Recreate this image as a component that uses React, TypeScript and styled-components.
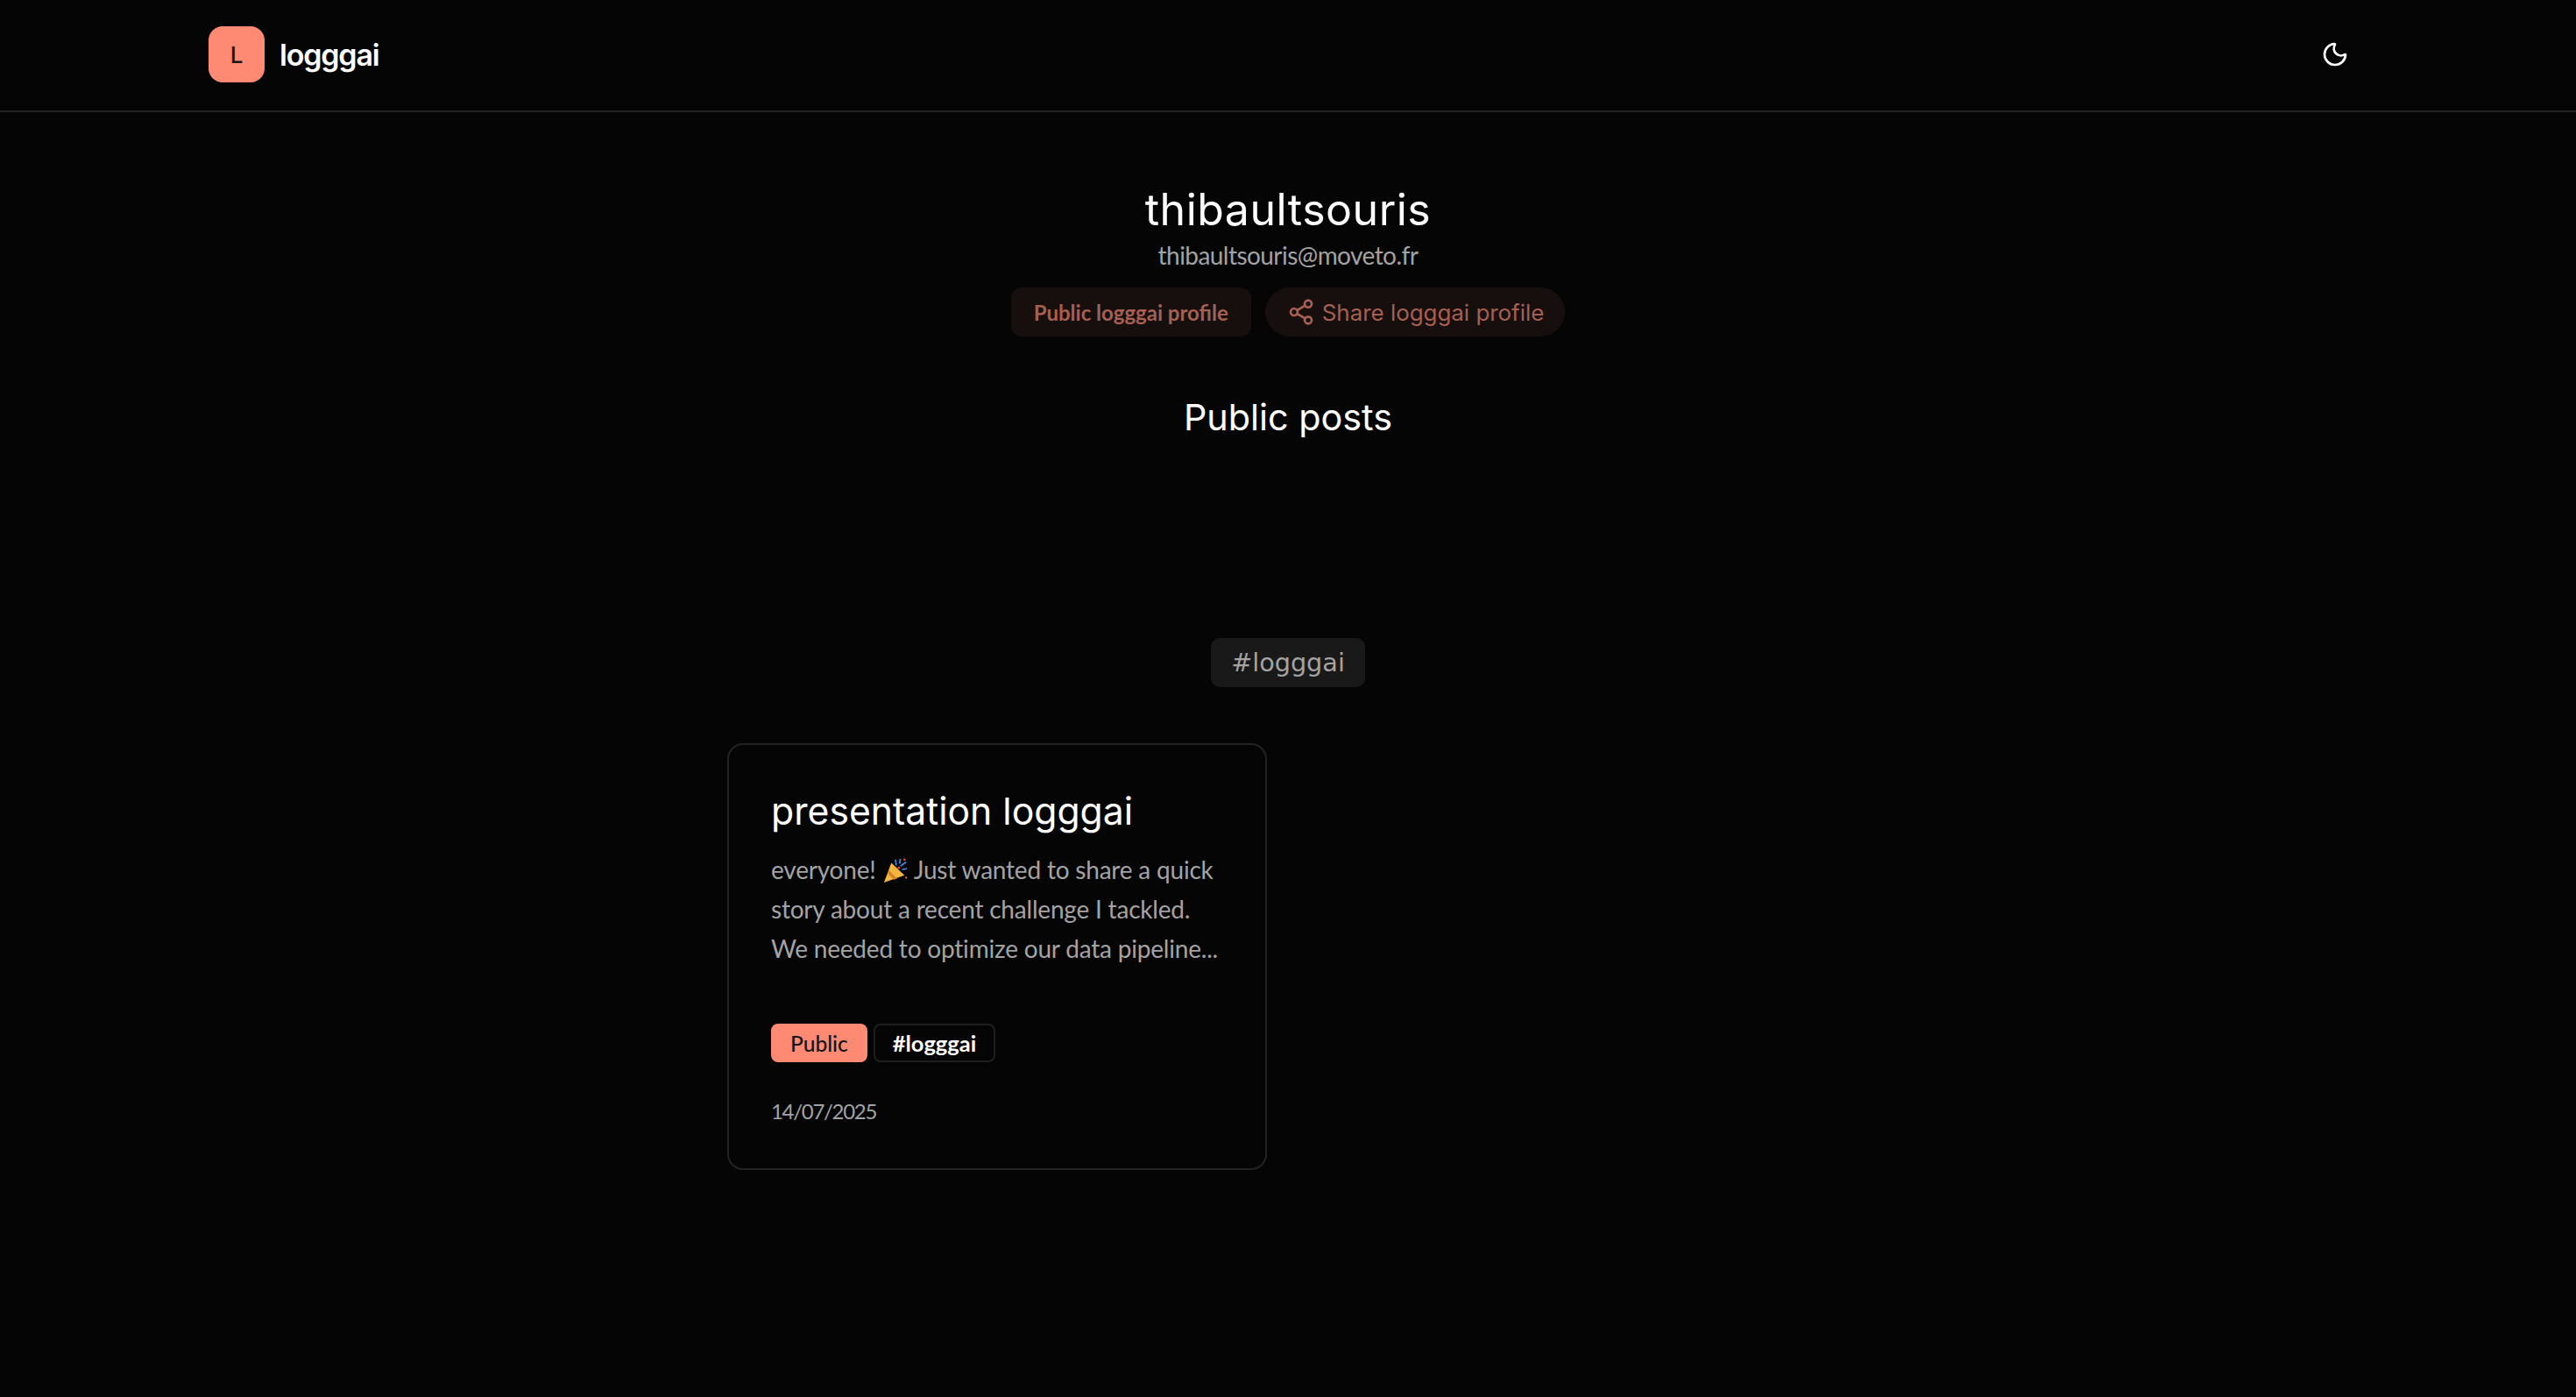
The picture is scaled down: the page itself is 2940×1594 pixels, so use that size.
import { createGlobalStyle, styled } from 'styled-components';
import { Moon, Share2 } from 'lucide-react';

const GlobalStyle = createGlobalStyle`
    html, body {
        margin: 0;
        padding: 0;
        background: #050505;
        color: #fff;
        font-family: 'Lato', 'Inter', sans-serif;
    }
    * {
        box-sizing: border-box;
    }
`;

const Page = styled.div`
    min-height: 1594px;
    background: #050505;
`;

const Navbar = styled.header`
    height: 128px;
    border-bottom: 2px solid #232323;
    padding: 0 238px;
    display: flex;
    align-items: center;
    justify-content: space-between;
`;

const Brand = styled.div`
    display: flex;
    align-items: center;
    gap: 17px;
    margin-top: -2px;
`;

const LogoMark = styled.div`
    width: 64px;
    height: 64px;
    border-radius: 16px;
    background: #ff8a73;
    color: #141414;
    display: flex;
    align-items: center;
    justify-content: center;
    font-family: 'Inter', sans-serif;
    font-size: 26px;
    font-weight: 500;
`;

const BrandName = styled.span`
    font-family: 'Inter', sans-serif;
    font-size: 34px;
    font-weight: 600;
    letter-spacing: -1.2px;
`;

const ThemeButton = styled.button`
    width: 74px;
    height: 60px;
    padding: 0;
    border: 0;
    background: transparent;
    color: #fff;
    display: flex;
    align-items: center;
    justify-content: center;
    margin-top: -2px;
`;

const Profile = styled.section`
    display: flex;
    flex-direction: column;
    align-items: center;
    padding-top: 83px;
`;

const Username = styled.h1`
    margin: 0;
    font-family: 'Inter', sans-serif;
    font-size: 50px;
    line-height: 56px;
    font-weight: 400;
    letter-spacing: 0.5px;
`;

const Email = styled.p`
    margin: 4px 0 0;
    font-size: 28px;
    line-height: 40px;
    letter-spacing: -0.55px;
    color: #a3a3a3;
`;

const ProfileActions = styled.div`
    display: flex;
    gap: 16px;
    margin-top: 17px;
`;

const ProfileLink = styled.a<{ $pill?: boolean }>`
    height: 56px;
    padding: ${(p) => (p.$pill ? '0 24px 0 25px' : '0 26px')};
    border-radius: ${(p) => (p.$pill ? '28px' : '12px')};
    background: #170f0e;
    color: #a65f50;
    display: flex;
    align-items: center;
    gap: 8px;
    font-family: ${(p) => (p.$pill ? "'Inter', sans-serif" : "'Lato', sans-serif")};
    font-size: ${(p) => (p.$pill ? '25.9px' : '24px')};
    font-weight: ${(p) => (p.$pill ? 400 : 700)};
`;

const SectionTitle = styled.h2`
    margin: 62px 0 0;
    font-family: 'Inter', sans-serif;
    font-size: 41.3px;
    line-height: 60px;
    font-weight: 400;
`;

const Filters = styled.div`
    display: flex;
    justify-content: center;
    margin-top: 222px;
`;

const FilterTag = styled.span`
    height: 56px;
    width: 176px;
    border-radius: 10px;
    background: #191919;
    color: #a3a3a3;
    display: flex;
    align-items: center;
    justify-content: center;
    font-family: 'DejaVu Sans', sans-serif;
    font-size: 28.7px;
`;

const PostGrid = styled.div`
    width: 1280px;
    margin: 64px auto 0;
    display: grid;
    grid-template-columns: 1fr 1fr;
    gap: 48px;
`;

const PostCard = styled.article`
    height: 487px;
    padding: 48px 48px;
    border: 2px solid #232323;
    border-radius: 18px;
`;

const PostTitle = styled.h3`
    margin: 0;
    font-family: 'Inter', sans-serif;
    font-size: 42.7px;
    line-height: 56px;
    font-weight: 400;
`;

const PostExcerpt = styled.p`
    margin: 16px 0 0;
    font-size: 28px;
    line-height: 45px;
    letter-spacing: -0.2px;
    color: #a3a3a3;
`;

const TagRow = styled.div`
    display: flex;
    gap: 7px;
    margin-top: 63px;
`;

const Tag = styled.span<{ $accent?: boolean }>`
    height: 44px;
    padding: 0 ${(p) => (p.$accent ? '20px' : '20px')};
    border-radius: 8px;
    border: 2px solid ${(p) => (p.$accent ? '#ff8a73' : '#1f1f1f')};
    background: ${(p) => (p.$accent ? '#ff8a73' : 'transparent')};
    color: ${(p) => (p.$accent ? '#141414' : '#fff')};
    display: flex;
    align-items: center;
    font-size: ${(p) => (p.$accent ? '24.5px' : '25.5px')};
    font-weight: ${(p) => (p.$accent ? 500 : 700)};
`;

const PostDate = styled.time`
    display: block;
    margin-top: 40px;
    font-size: 24px;
    line-height: 32px;
    letter-spacing: -1.3px;
    color: #a3a3a3;
`;

const PopperIcon = styled.svg`
    width: 30px;
    height: 30px;
    vertical-align: -5px;
`;

const Popper = () => (
    <PopperIcon viewBox="0 0 32 32">
        <path d="M11 7 L27 22 L2 31 Z" fill="#f4b63f" />
        <path d="M8 16 L18 26 L14 27.5 L6.5 20 Z" fill="#d9822b" />
        <path d="M16 3 l1 7 M22 2 l-1 6 M29 6 l-7 5 M30 14 l-6 1" stroke="#3f7fd9" strokeWidth="2" fill="none" />
        <circle cx="27" cy="3" r="1.5" fill="#d9483b" />
        <circle cx="20" cy="13" r="1.5" fill="#d9483b" />
        <circle cx="29" cy="25" r="1.2" fill="#d9822b" />
    </PopperIcon>
);

export default function App() {
    return (
        <Page>
            <GlobalStyle />
            <Navbar>
                <Brand>
                    <LogoMark>L</LogoMark>
                    <BrandName>logggai</BrandName>
                </Brand>
                <ThemeButton aria-label="Toggle theme">
                    <Moon size={32} strokeWidth={2} />
                </ThemeButton>
            </Navbar>
            <Profile>
                <Username>thibaultsouris</Username>
                <Email>thibaultsouris@moveto.fr</Email>
                <ProfileActions>
                    <ProfileLink>Public logggai profile</ProfileLink>
                    <ProfileLink $pill>
                        <Share2 size={32} strokeWidth={2} />
                        Share logggai profile
                    </ProfileLink>
                </ProfileActions>
                <SectionTitle>Public posts</SectionTitle>
            </Profile>
            <Filters>
                <FilterTag>#logggai</FilterTag>
            </Filters>
            <PostGrid>
                <PostCard>
                    <PostTitle>presentation logggai</PostTitle>
                    <PostExcerpt>
                        everyone! <Popper /> Just wanted to share a quick story about a recent challenge I tackled. We needed to optimize our data pipeline...
                    </PostExcerpt>
                    <TagRow>
                        <Tag $accent>Public</Tag>
                        <Tag>#logggai</Tag>
                    </TagRow>
                    <PostDate>14/07/2025</PostDate>
                </PostCard>
            </PostGrid>
        </Page>
    );
}
